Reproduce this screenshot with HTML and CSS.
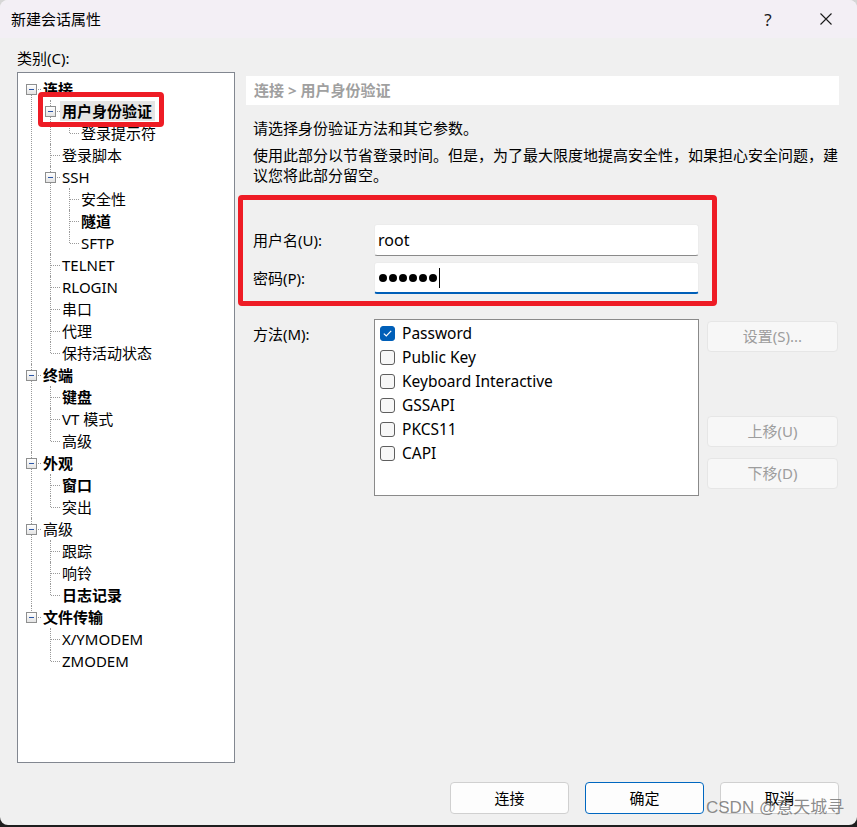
FILE: index.html
```html
<!DOCTYPE html>
<html lang="zh-CN">
<head>
<meta charset="utf-8">
<title>新建会话属性</title>
<link rel="stylesheet" href="styles.css">
</head>
<body>
<div class="window">
  <header class="titlebar">
    <span class="title">新建会话属性</span>
    <span class="help">?</span>
    <span class="close"><svg width="12" height="12" viewBox="0 0 12 12"><path d="M0.5 0.5 L11.5 11.5 M11.5 0.5 L0.5 11.5" stroke="#1a1a1a" stroke-width="1.1" fill="none"/></svg></span>
  </header>
  <main class="content">
    <div class="cat-label">类别(C):</div>
    <div class="main">
      <nav class="tree">
        <ul class="root">
          <li><span class="tw"></span><div class="row b"><span class="lbl">连接</span></div>
            <ul>
              <li class="sel"><span class="tw"></span><div class="row b"><span class="lbl">用户身份验证</span></div><span class="mark"></span>
                <ul>
                  <li><div class="row"><span class="lbl">登录提示符</span></div></li>
                </ul>
              </li>
              <li><div class="row"><span class="lbl">登录脚本</span></div></li>
              <li><span class="tw"></span><div class="row"><span class="lbl">SSH</span></div>
                <ul>
                  <li><div class="row"><span class="lbl">安全性</span></div></li>
                  <li><div class="row b"><span class="lbl">隧道</span></div></li>
                  <li><div class="row"><span class="lbl">SFTP</span></div></li>
                </ul>
              </li>
              <li><div class="row"><span class="lbl">TELNET</span></div></li>
              <li><div class="row"><span class="lbl">RLOGIN</span></div></li>
              <li><div class="row"><span class="lbl">串口</span></div></li>
              <li><div class="row"><span class="lbl">代理</span></div></li>
              <li><div class="row"><span class="lbl">保持活动状态</span></div></li>
            </ul>
          </li>
          <li><span class="tw"></span><div class="row b"><span class="lbl">终端</span></div>
            <ul>
              <li><div class="row b"><span class="lbl">键盘</span></div></li>
              <li><div class="row"><span class="lbl">VT 模式</span></div></li>
              <li><div class="row"><span class="lbl">高级</span></div></li>
            </ul>
          </li>
          <li><span class="tw"></span><div class="row b"><span class="lbl">外观</span></div>
            <ul>
              <li><div class="row b"><span class="lbl">窗口</span></div></li>
              <li><div class="row"><span class="lbl">突出</span></div></li>
            </ul>
          </li>
          <li><span class="tw"></span><div class="row"><span class="lbl">高级</span></div>
            <ul>
              <li><div class="row"><span class="lbl">跟踪</span></div></li>
              <li><div class="row"><span class="lbl">响铃</span></div></li>
              <li><div class="row b"><span class="lbl">日志记录</span></div></li>
            </ul>
          </li>
          <li><span class="tw"></span><div class="row b"><span class="lbl">文件传输</span></div>
            <ul>
              <li><div class="row"><span class="lbl">X/YMODEM</span></div></li>
              <li><div class="row"><span class="lbl">ZMODEM</span></div></li>
            </ul>
          </li>
        </ul>
      </nav>
      <section class="panel">
        <div class="crumb">连接 &gt; 用户身份验证</div>
        <p class="p1">请选择身份验证方法和其它参数。</p>
        <p class="p2">使用此部分以节省登录时间。但是，为了最大限度地提高安全性，如果担心安全问题，建<br>议您将此部分留空。</p>
        <div class="auth">
          <label class="flabel">用户名(U):</label>
          <div class="field">root</div>
          <label class="flabel">密码(P):</label>
          <div class="field pwd"><span class="dot"></span><span class="dot"></span><span class="dot"></span><span class="dot"></span><span class="dot"></span><span class="dot"></span><span class="caret"></span></div>
        </div>
        <div class="methods">
          <div class="mlabel">方法(M):</div>
          <div class="listbox">
            <div class="item"><span class="cb on"><svg width="9" height="7" viewBox="0 0 9 7"><path d="M0.8 3.6 L3.3 6 L8.2 0.9" stroke="#fff" stroke-width="1.2" fill="none"/></svg></span>Password</div>
            <div class="item"><span class="cb"></span>Public Key</div>
            <div class="item"><span class="cb"></span>Keyboard Interactive</div>
            <div class="item"><span class="cb"></span>GSSAPI</div>
            <div class="item"><span class="cb"></span>PKCS11</div>
            <div class="item"><span class="cb"></span>CAPI</div>
          </div>
          <div class="sidebtns">
            <div class="sbtn s1">设置(S)...</div>
            <div class="sbtn s2">上移(U)</div>
            <div class="sbtn s3">下移(D)</div>
          </div>
        </div>
      </section>
    </div>
    <footer class="footer">
      <div class="btn">连接</div>
      <div class="btn primary">确定</div>
      <div class="btn">取消</div>
    </footer>
  </main>
  <div class="watermark">CSDN @意天城寻</div>
</div>
</body>
</html>
```
FILE: styles.css
```css
html {
  background: linear-gradient(#d6d6d6 0, #d6d6d6 50%, #1e1e1e 50%, #1e1e1e 100%);
  height: 100%;
}
body {
  margin: 0;
  font-family: "Noto Sans", "Noto Sans CJK SC", sans-serif;
  font-size: 15px;
  color: #000;
}
.window {
  position: relative;
  width: 857px;
  height: 825px;
  background: #f0f0f0;
  border-radius: 8px;
  overflow: hidden;
}
.titlebar {
  height: 38px;
  background: #f3eff5;
  display: flex;
  align-items: center;
}
.title {
  padding-left: 11px;
  line-height: 20px;
}
.help {
  margin-left: auto;
  width: 20px;
  text-align: center;
  font-size: 17px;
  color: #1a1a1a;
}
.close {
  width: 20px;
  margin-left: 38px;
  margin-right: 21px;
  display: flex;
  justify-content: center;
}
.content {
  padding: 10px 18px 11px 17px;
}
.cat-label {
  line-height: 20px;
}
.main {
  display: flex;
  gap: 11px;
  height: 691px;
  margin-top: 4px;
}
.tree {
  width: 218px;
  box-sizing: border-box;
  border: 1px solid #828790;
  background: #fff;
  padding-top: 5px;
  overflow: hidden;
}
.tree ul {
  list-style: none;
  margin: 0;
  padding: 0;
}
.tree ul ul {
  margin-left: 19px;
}
.tree li {
  position: relative;
}
.tree li::before {
  content: "";
  position: absolute;
  left: 13px;
  top: 0;
  bottom: 0;
  border-left: 1px dotted #9a9a9a;
}
.tree li:last-child::before {
  bottom: auto;
  height: 11px;
}
.tree .root > li:first-child::before {
  top: 11px;
}
.tree li::after {
  content: "";
  position: absolute;
  left: 14px;
  top: 11px;
  width: 9px;
  border-top: 1px dotted #9a9a9a;
}
.tw {
  position: absolute;
  z-index: 2;
  left: 8px;
  top: 6px;
  width: 9px;
  height: 9px;
  border: 1px solid #8e8f8f;
  background: linear-gradient(#ffffff, #e4e4e4);
}
.tw::after {
  content: "";
  position: absolute;
  left: 2px;
  top: 4px;
  width: 5px;
  height: 1px;
  background: #2c56a6;
}
.row {
  height: 22px;
  line-height: 22px;
  padding-left: 23px;
  white-space: nowrap;
}
.lbl {
  padding: 0 2px;
}
.row.b .lbl {
  font-weight: bold;
}
.sel > .row .lbl {
  background: #e5e5e5;
  display: inline-block;
  line-height: 20px;
  padding-right: 3px;
}
.mark {
  position: absolute;
  z-index: 3;
  left: 1px;
  top: -8px;
  width: 126px;
  height: 35px;
  box-sizing: border-box;
  border: 5px solid #ee1c25;
  border-radius: 4px;
}
.panel {
  width: 593px;
}
.crumb {
  height: 29px;
  margin-top: 4px;
  background: #fff;
  padding-left: 8px;
  line-height: 29px;
  color: #a0a0a0;
  font-weight: bold;
}
.p1 {
  margin: 13px 0 0 7px;
  line-height: 20px;
}
.p2 {
  margin: 7px 0 0 7px;
  line-height: 20px;
  white-space: nowrap;
}
.auth {
  margin: 10px 0 0 -8px;
  width: 479px;
  box-sizing: border-box;
  border: 5px solid #ee1c25;
  border-radius: 4px;
  padding: 24px 13px 7px 10px;
  display: grid;
  grid-template-columns: 121px 325px;
  row-gap: 6px;
  align-items: center;
}
.flabel {
  line-height: 20px;
}
.field {
  height: 32px;
  box-sizing: border-box;
  background: #fff;
  border: 1px solid #ececec;
  border-bottom: 1px solid #8a8a8a;
  border-radius: 3px;
  padding-left: 3px;
  line-height: 28px;
  font-size: 16px;
  display: flex;
  align-items: center;
}
.field.pwd {
  border-bottom: 2px solid #005fb8;
  padding-left: 4px;
}
.dot {
  width: 8px;
  height: 8px;
  border-radius: 50%;
  background: #000;
  margin-right: 2px;
}
.caret {
  width: 1px;
  height: 20px;
  background: #000;
}
.methods {
  margin: 13px 0 0 7px;
  display: grid;
  grid-template-columns: 121px 333px 131px;
}
.mlabel {
  margin-top: 5px;
  line-height: 20px;
}
.listbox {
  width: 325px;
  height: 177px;
  box-sizing: border-box;
  border: 1px solid #8a8a8a;
  background: #fff;
  padding: 1px 0 0 5px;
}
.item {
  height: 24px;
  display: flex;
  align-items: center;
  gap: 7px;
  white-space: nowrap;
  font-size: 15.5px;
}
.cb {
  width: 15px;
  height: 15px;
  box-sizing: border-box;
  border: 1px solid #5e5e5e;
  border-radius: 3px;
  background: #f7f7f7;
  display: flex;
  align-items: center;
  justify-content: center;
}
.cb.on {
  background: #005fb8;
  border-color: #005fb8;
}
.sidebtns {
  display: flex;
  flex-direction: column;
}
.sbtn {
  height: 31px;
  box-sizing: border-box;
  border: 1px solid #e6e6e6;
  border-radius: 4px;
  background: #f7f7f7;
  color: #9d9d9d;
  text-align: center;
  line-height: 29px;
}
.s1 { margin-top: 2px; }
.s2 { margin-top: 64px; }
.s3 { margin-top: 11px; }
.footer {
  margin-top: 19px;
  display: flex;
  justify-content: flex-end;
  gap: 16px;
}
.btn {
  width: 119px;
  height: 32px;
  box-sizing: border-box;
  border: 1px solid #d0d0d0;
  border-radius: 4px;
  background: #fdfdfd;
  text-align: center;
  line-height: 30px;
}
.btn.primary {
  border-color: #0067c0;
}
.watermark {
  position: absolute;
  left: 706px;
  top: 797px;
  font-family: "Liberation Sans", "Noto Sans CJK SC", sans-serif;
  font-size: 17px;
  line-height: 22px;
  color: rgba(110, 110, 110, 0.8);
  white-space: nowrap;
}
```
